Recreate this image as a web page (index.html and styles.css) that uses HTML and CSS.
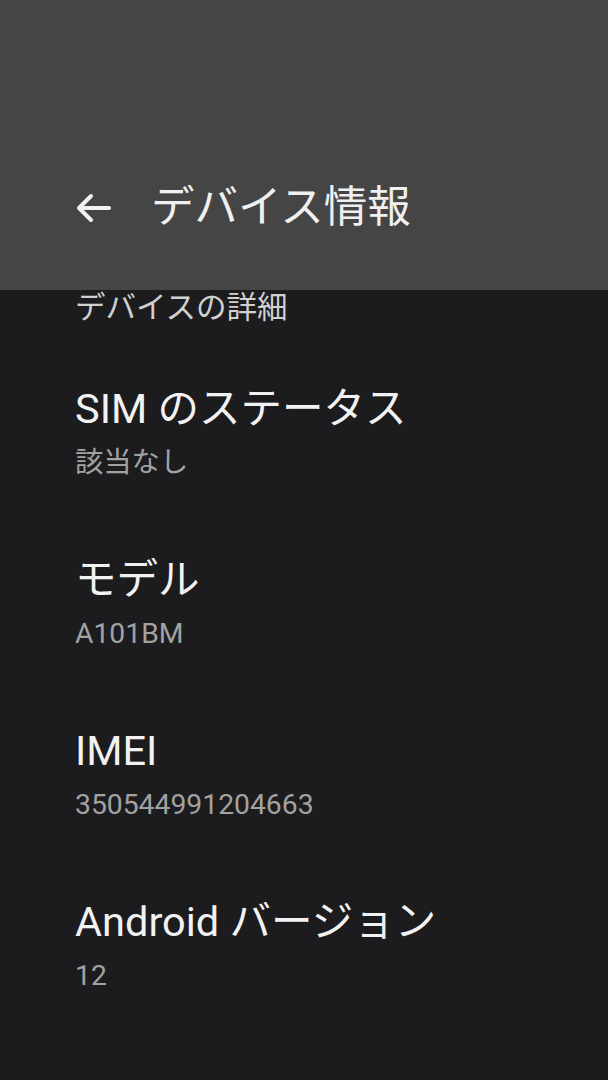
FILE: index.html
```html
<!DOCTYPE html>
<html lang="ja">
<head>
<meta charset="utf-8">
<link rel="stylesheet" href="styles.css">
</head>
<body>
<div class="screen">
  <header class="appbar">
    <div class="bar-row">
      <svg class="back" viewBox="0 0 36 30" width="36" height="30">
        <path d="M34 15H4M16 3L4 15L16 27" fill="none" stroke="#f2f2f2" stroke-width="4" stroke-linecap="round" stroke-linejoin="round"/>
      </svg>
      <h1 class="title">デバイス情報</h1>
    </div>
  </header>
  <main class="content">
    <div class="section-label">デバイスの詳細</div>
    <div class="item">
      <div class="item-title">SIM のステータス</div>
      <div class="item-sub">該当なし</div>
    </div>
    <div class="item">
      <div class="item-title">モデル</div>
      <div class="item-sub">A101BM</div>
    </div>
    <div class="item">
      <div class="item-title">IMEI</div>
      <div class="item-sub">350544991204663</div>
    </div>
    <div class="item">
      <div class="item-title">Android バージョン</div>
      <div class="item-sub">12</div>
    </div>
  </main>
</div>
</body>
</html>
```
FILE: styles.css
```css
html, body {
  margin: 0;
  padding: 0;
  background: #1c1b1e;
}
body {
  font-family: Roboto, "Noto Sans CJK JP", sans-serif;
  width: 608px;
  height: 1080px;
  overflow: hidden;
}
.screen {
  display: flex;
  flex-direction: column;
  height: 1080px;
}
.appbar {
  background: #454545;
  height: 290px;
  display: flex;
  flex-direction: column;
  justify-content: flex-end;
  padding-bottom: 54px;
  box-sizing: border-box;
}
.bar-row {
  display: flex;
  align-items: center;
  height: 56px;
  padding-left: 75px;
}
.back {
  display: block;
  margin-right: 40px;
}
.title {
  margin: 0;
  font-weight: 400;
  font-size: 43.5px;
  line-height: 56px;
  color: #f0f0f0;
}
.content {
  padding-left: 75px;
  display: flex;
  flex-direction: column;
}
.section-label {
  font-size: 30.5px;
  line-height: 36px;
  color: #d0d0d0;
  margin-bottom: 21px;
}
.item {
  padding: 36px 0 35px;
  display: flex;
  flex-direction: column;
  gap: 8px;
}
.item-title {
  font-size: 41.5px;
  line-height: 52px;
  color: #f2f2f2;
}
.item-sub {
  font-size: 28.3px;
  line-height: 40px;
  color: #a2a2a2;
}
```
